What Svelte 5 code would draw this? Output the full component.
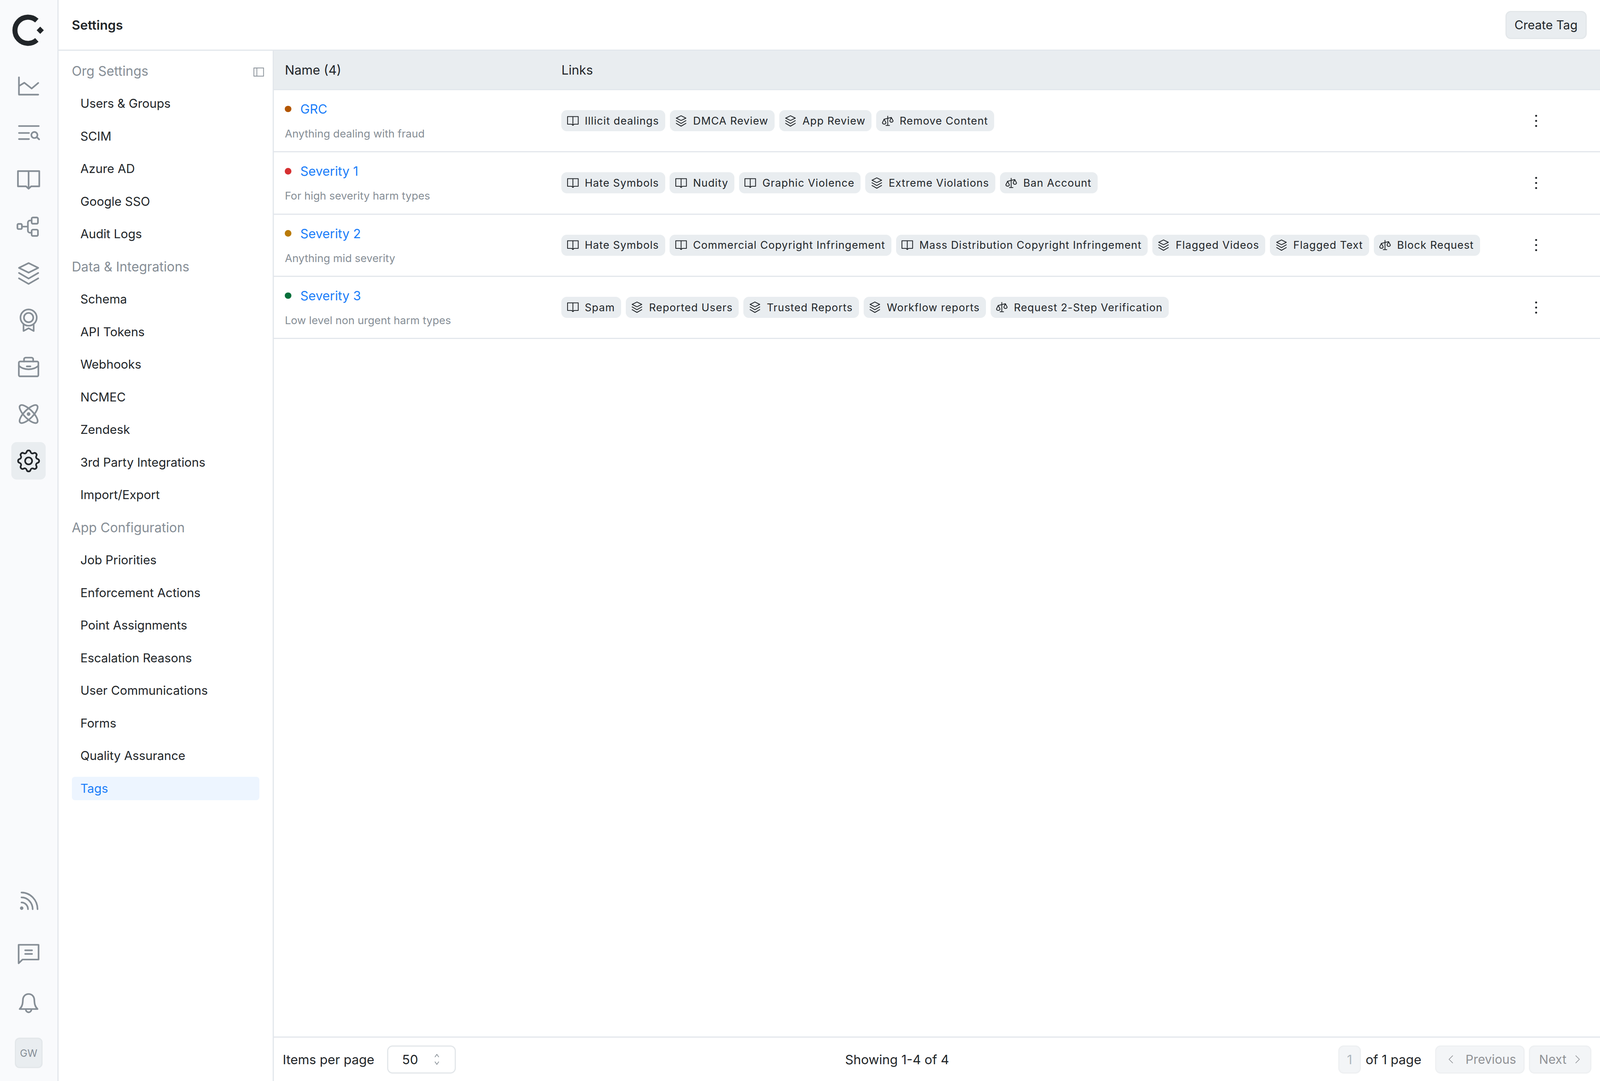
<script>
  const topIcons = ['chart', 'listSearch', 'book', 'flow', 'stack', 'award', 'briefcase', 'atom', 'gear']
  const bottomIcons = ['rss', 'message', 'bell']

  const navGroups = [
    { title: 'Org Settings', items: ['Users & Groups', 'SCIM', 'Azure AD', 'Google SSO', 'Audit Logs'] },
    { title: 'Data & Integrations', items: ['Schema', 'API Tokens', 'Webhooks', 'NCMEC', 'Zendesk', '3rd Party Integrations', 'Import/Export'] },
    { title: 'App Configuration', items: ['Job Priorities', 'Enforcement Actions', 'Point Assignments', 'Escalation Reasons', 'User Communications', 'Forms', 'Quality Assurance', 'Tags'] }
  ]

  const rows = [
    {
      name: 'GRC', color: '#b35600', desc: 'Anything dealing with fraud',
      links: [['book', 'Illicit dealings'], ['stack', 'DMCA Review'], ['stack', 'App Review'], ['scale', 'Remove Content']]
    },
    {
      name: 'Severity 1', color: '#d63031', desc: 'For high severity harm types',
      links: [['book', 'Hate Symbols'], ['book', 'Nudity'], ['book', 'Graphic Violence'], ['stack', 'Extreme Violations'], ['scale', 'Ban Account']]
    },
    {
      name: 'Severity 2', color: '#b97a08', desc: 'Anything mid severity',
      links: [['book', 'Hate Symbols'], ['book', 'Commercial Copyright Infringement'], ['book', 'Mass Distribution Copyright Infringement'], ['stack', 'Flagged Videos'], ['stack', 'Flagged Text'], ['scale', 'Block Request']]
    },
    {
      name: 'Severity 3', color: '#066f3a', desc: 'Low level non urgent harm types',
      links: [['book', 'Spam'], ['stack', 'Reported Users'], ['stack', 'Trusted Reports'], ['stack', 'Workflow reports'], ['scale', 'Request 2-Step Verification']]
    }
  ]
</script>

{#snippet icon(name)}
  <svg class="icon" viewBox="0 0 24 24" fill="none" stroke="currentColor" stroke-width="1.6" stroke-linecap="round" stroke-linejoin="round">
    {#if name === 'chart'}
      <path d="M2.5 3.5V20.5H21.5M2.5 12L7.8 8.8L15 14.5L21.5 9" />
    {:else if name === 'listSearch'}
      <path d="M2.5 5.3H22M2.5 12.1H12.4M2.5 18.1H12.4" />
      <circle cx="17.7" cy="14.1" r="3" />
      <path d="M20 16.2L22.4 18.4" />
    {:else if name === 'book'}
      <path d="M12 3.5H22.5V18.5H14.5L12 20.8L9.5 18.5H1.5V3.5H12ZM12 3.5V20.8" />
    {:else if name === 'flow'}
      <rect x="1" y="9.4" width="4.4" height="5" rx="1" />
      <rect x="15" y="3" width="6.2" height="6.2" rx="1.2" />
      <rect x="15" y="15" width="6.2" height="6.2" rx="1.2" />
      <path d="M5.4 12H11.3M15 6H13.3A2 2 0 0 0 11.3 8V16A2 2 0 0 0 13.3 18H15" />
    {:else if name === 'stack'}
      <path d="M12 1.8L21.5 6.5L12 11.2L2.5 6.5ZM2.5 11.5L12 17L21.5 11.5M2.5 16.8L12 22.3L21.5 16.8" />
    {:else if name === 'award'}
      <circle cx="12" cy="9.3" r="8" />
      <circle cx="12" cy="9.3" r="4.6" />
      <path d="M7 16V22.5L12 19.8L17 22.5V16" />
    {:else if name === 'briefcase'}
      <rect x="2.4" y="6.4" width="19.2" height="14.6" rx="1.2" />
      <path d="M7.5 6.4V4.2A1.6 1.6 0 0 1 9.1 2.6H14.9A1.6 1.6 0 0 1 16.5 4.2V6.4M2.4 10.6C7 15.2 17 15.2 21.6 10.6M10.2 11.2H13.8" />
    {:else if name === 'atom'}
      <ellipse cx="12" cy="12" rx="4.3" ry="11.8" transform="rotate(45 12 12)" />
      <ellipse cx="12" cy="12" rx="4.3" ry="11.8" transform="rotate(-45 12 12)" />
      <circle cx="12" cy="12" r="1" fill="currentColor" />
    {:else if name === 'gear'}
      <g transform="translate(12 12) scale(1.15) translate(-12 -12)" stroke-width="1.4">
        <path d="M10.325 4.317c.426 -1.756 2.924 -1.756 3.35 0a1.724 1.724 0 0 0 2.573 1.066c1.543 -.94 3.31 .826 2.37 2.37a1.724 1.724 0 0 0 1.065 2.572c1.756 .426 1.756 2.924 0 3.35a1.724 1.724 0 0 0 -1.066 2.573c.94 1.543 -.826 3.31 -2.37 2.37a1.724 1.724 0 0 0 -2.572 1.065c-.426 1.756 -2.924 1.756 -3.35 0a1.724 1.724 0 0 0 -2.573 -1.066c-1.543 .94 -3.31 -.826 -2.37 -2.37a1.724 1.724 0 0 0 -1.065 -2.572c-1.756 -.426 -1.756 -2.924 0 -3.35a1.724 1.724 0 0 0 1.066 -2.573c-.94 -1.543 .826 -3.31 2.37 -2.37c1 .608 2.296 .07 2.572 -1.065z" />
        <circle cx="12" cy="12" r="3" />
      </g>
    {:else if name === 'rss'}
      <path d="M5 4A15.8 16.5 0 0 1 20.8 20.4M5 8.8A11 11.7 0 0 1 16 20.4M5 13.8A6.4 6.6 0 0 1 11.4 20.4" />
      <circle cx="5.2" cy="19.4" r=".9" fill="currentColor" />
    {:else if name === 'message'}
      <path d="M2.2 2.8H21.8V17.3H6L2.2 21Z" />
      <path d="M8.6 8.2H15.4M8.6 11.8H15.4" />
    {:else if name === 'bell'}
      <path d="M12 2.4C8.6 2.4 6.5 5 6.4 8C6.2 11.6 6 14.4 3.2 17.2H20.8C18 14.4 17.8 11.6 17.6 8C17.5 5 15.4 2.4 12 2.4Z" />
      <path d="M9.2 17.4C9.5 21.4 14.5 21.4 14.8 17.4" />
    {:else if name === 'scale'}
      <path d="M12 2.8V21M8.5 21H15.5M4.9 8.7L19 5.2" />
      <path d="M4.9 8.7L1.5 15.6A3.6 3.6 0 0 0 8.5 15.6ZM19 5.2L16 12A3.4 3.4 0 0 0 22.6 12Z" />
    {/if}
  </svg>
{/snippet}

<div class="app">
  <aside class="rail">
    <svg class="logo" viewBox="0 0 90 90" fill="none">
      <path d="M70 17.5A36.5 36.5 0 1 0 70 71.5" stroke="#212529" stroke-width="14" />
      <path d="M79.5 34.5L89.5 44.5L79.5 54.5L69.5 44.5Z" fill="#212529" />
    </svg>

    <div class="rail-group">
      {#each topIcons as name}
        <div class="rail-item" class:active={name === 'gear'}>{@render icon(name)}</div>
      {/each}
    </div>

    <div class="rail-group bottom">
      {#each bottomIcons as name}
        <div class="rail-item">{@render icon(name)}</div>
      {/each}
      <div class="avatar">GW</div>
    </div>
  </aside>

  <div class="main">
    <header>
      <div class="title">Settings</div>
      <button class="create">Create Tag</button>
    </header>

    <div class="body">
      <nav>
        <svg class="collapse" viewBox="0 0 28 24" fill="none" stroke="currentColor" stroke-width="2">
          <rect x="1" y="1" width="26" height="22" />
          <path d="M9 1V23" />
        </svg>
        {#each navGroups as group}
          <div class="nav-title">{group.title}</div>
          {#each group.items as item}
            <div class="nav-item" class:current={item === 'Tags'}>{item}</div>
          {/each}
        {/each}
      </nav>

      <section class="content">
        <div class="table-head">
          <div class="col-name">Name (4)</div>
          <div>Links</div>
        </div>

        <div class="rows">
          {#each rows as row}
            <div class="row">
              <div class="col-name">
                <div class="name">
                  <span class="dot" style="background: {row.color};"></span>
                  <span>{row.name}</span>
                </div>
                <div class="desc">{row.desc}</div>
              </div>
              <div class="chips">
                {#each row.links as link}
                  <div class="chip">{@render icon(link[0])}<span>{link[1]}</span></div>
                {/each}
              </div>
              <div class="kebab"><i></i><i></i><i></i></div>
            </div>
          {/each}
        </div>

        <footer>
          <div class="foot-left">
            <span>Items per page</span>
            <div class="select">
              <span>50</span>
              <svg viewBox="0 0 16 34" fill="none" stroke="currentColor" stroke-width="2" stroke-linecap="round" stroke-linejoin="round">
                <path d="M3 10L8 3L13 10M3 24L8 31L13 24" />
              </svg>
            </div>
          </div>
          <div>Showing 1-4 of 4</div>
          <div class="foot-right">
            <div class="page-box">1</div>
            <span class="of">of 1 page</span>
            <div class="page-btn prev">
              <svg viewBox="0 0 16 26" fill="none" stroke="currentColor" stroke-width="2"><path d="M14 1L2 13L14 25" /></svg>
              <span>Previous</span>
            </div>
            <div class="page-btn next">
              <span>Next</span>
              <svg viewBox="0 0 16 26" fill="none" stroke="currentColor" stroke-width="2"><path d="M2 1L14 13L2 25" /></svg>
            </div>
          </div>
        </footer>
      </section>
    </div>
  </div>
</div>

<style>
  :global(body) {
    margin: 0;
    background: #fff;
    font-family: Inter, "Liberation Sans", sans-serif;
    color: #212529;
  }

  /* widths follow the window, 4460 wide is the design size */
  .app {
    --u: calc(100vw / 4460);
    display: flex;
    width: 100%;
    height: 100vh;
    overflow: hidden;
    font-size: calc(34 * var(--u));
  }

  .rail {
    width: calc(163 * var(--u));
    flex-shrink: 0;
    box-sizing: border-box;
    background: #f9fafc;
    border-right: 3px solid #e3e7ec;
    display: flex;
    flex-direction: column;
    align-items: center;
    padding: 33px 0;
  }

  .logo {
    width: calc(90 * var(--u));
    height: 90px;
    margin-left: calc(-4 * var(--u));
  }

  .rail-group {
    display: flex;
    flex-direction: column;
    align-items: center;
    gap: 24px;
    margin-top: 49px;
  }

  .rail-group.bottom {
    margin-top: auto;
    gap: 31px;
  }

  .bottom .rail-item:first-child {
    margin-bottom: 10px;
  }

  .rail-item {
    width: calc(96 * var(--u));
    height: 96px;
    border-radius: 14px;
    display: flex;
    align-items: center;
    justify-content: center;
    color: #868e96;
  }

  .rail-item .icon {
    width: calc(68 * var(--u));
    height: calc(68 * var(--u));
  }

  .rail-item.active {
    background: #e9edf0;
    color: #212529;
  }

  .avatar {
    width: calc(77 * var(--u));
    height: 78px;
    margin-top: 8px;
    box-sizing: border-box;
    border: 3px solid #e3e7ea;
    border-radius: 12px;
    background: #e9edf0;
    color: #868e96;
    font-size: calc(28 * var(--u));
    display: flex;
    align-items: center;
    justify-content: center;
  }

  .main {
    flex: 1;
    min-width: 0;
    display: flex;
    flex-direction: column;
  }

  header {
    height: 127px;
    flex-shrink: 0;
    border-bottom: 3px solid #e3e7ec;
    display: flex;
    align-items: center;
    justify-content: space-between;
    padding: 0 calc(37 * var(--u));
  }

  .title {
    font-weight: 600;
    font-size: calc(36 * var(--u));
  }

  .create {
    height: 72px;
    width: calc(227 * var(--u));
    border: 3px solid #e3e7ea;
    border-radius: 14px;
    background: #e9edf0;
    color: #212529;
    font-family: inherit;
    font-size: calc(34 * var(--u));
    padding: 0;
  }

  .body {
    flex: 1;
    min-height: 0;
    display: flex;
  }

  nav {
    position: relative;
    width: calc(600 * var(--u));
    flex-shrink: 0;
    box-sizing: border-box;
    border-right: 3px solid #e3e7ec;
    padding: 10px calc(37 * var(--u)) 0;
  }

  .collapse {
    position: absolute;
    left: calc(544 * var(--u));
    top: 42px;
    width: calc(29 * var(--u));
    height: 25px;
    color: #868e96;
  }

  .nav-title,
  .nav-item {
    height: 83.5px;
    display: flex;
    align-items: center;
  }

  .nav-title {
    color: #868e96;
    font-size: calc(36.5 * var(--u));
  }

  .nav-item {
    padding-left: calc(24 * var(--u));
    position: relative;
  }

  .nav-item.current {
    color: #1c7ef9;
  }

  .nav-item.current::before {
    content: '';
    position: absolute;
    left: 0;
    right: 0;
    top: 12px;
    bottom: 12px;
    border-radius: 8px;
    background: #edf5ff;
    z-index: -1;
  }

  .content {
    flex: 1;
    min-width: 0;
    display: flex;
    flex-direction: column;
  }

  .table-head {
    height: 101px;
    box-sizing: border-box;
    flex-shrink: 0;
    background: #e9edf0;
    border-bottom: 3px solid #e3e7ec;
    display: flex;
    align-items: center;
    font-size: calc(35.5 * var(--u));
  }

  .col-name {
    width: calc(802 * var(--u));
    flex-shrink: 0;
    padding-left: calc(31 * var(--u));
    box-sizing: border-box;
  }

  .rows {
    flex: 1;
    min-height: 0;
  }

  .row {
    height: 159.3px;
    box-sizing: border-box;
    border-bottom: 3px solid #e3e7ec;
    display: flex;
    align-items: center;
  }

  .name {
    display: flex;
    align-items: center;
    color: #1c7ef9;
    font-size: calc(35.5 * var(--u));
  }

  .dot {
    width: calc(18 * var(--u));
    height: calc(18 * var(--u));
    border-radius: 50%;
    margin-right: calc(25 * var(--u));
  }

  .desc {
    margin-top: 26px;
    font-size: calc(30 * var(--u));
    color: #868e96;
  }

  .chips {
    display: flex;
    gap: calc(13 * var(--u));
  }

  .chip {
    height: 54px;
    border-radius: 14px;
    background: #e9edf0;
    display: flex;
    align-items: center;
    gap: calc(16.5 * var(--u));
    padding: 0 calc(17 * var(--u)) 0 calc(14.5 * var(--u));
    font-size: calc(29.5 * var(--u));
    letter-spacing: calc(1.15 * var(--u));
    white-space: nowrap;
  }

  .chip .icon {
    width: calc(34 * var(--u));
    height: calc(34 * var(--u));
    flex-shrink: 0;
  }

  .kebab {
    margin-left: auto;
    margin-right: calc(175 * var(--u));
    display: flex;
    flex-direction: column;
    gap: 8px;
  }

  .kebab i {
    display: block;
    width: 5px;
    height: 5px;
    border-radius: 50%;
    background: #212529;
  }

  footer {
    height: 114px;
    box-sizing: border-box;
    flex-shrink: 0;
    border-top: 3px solid #e3e7ec;
    display: flex;
    align-items: center;
    justify-content: space-between;
    padding: 0 calc(24 * var(--u)) 0 calc(25 * var(--u));
    font-size: calc(36 * var(--u));
  }

  .foot-left,
  .foot-right {
    display: flex;
    align-items: center;
  }

  .select {
    width: calc(191 * var(--u));
    height: 72px;
    margin-left: calc(36 * var(--u));
    border: 3px solid #e3e7ea;
    border-radius: 14px;
    box-sizing: border-box;
    display: flex;
    align-items: center;
    justify-content: space-between;
    padding: 0 calc(42 * var(--u)) 0 calc(38 * var(--u));
  }

  .select svg {
    width: calc(16 * var(--u));
    height: calc(34 * var(--u));
    color: #868e96;
  }

  .page-box {
    width: calc(63 * var(--u));
    height: 72px;
    box-sizing: border-box;
    border: 3px solid #eef0f2;
    border-radius: 14px;
    background: #f3f5f7;
    color: #adb5bd;
    display: flex;
    align-items: center;
    justify-content: center;
  }

  .of {
    margin: 0 calc(39 * var(--u)) 0 calc(13 * var(--u));
  }

  .page-btn {
    height: 72px;
    box-sizing: border-box;
    border: 3px solid #eef0f2;
    border-radius: 14px;
    background: #f3f5f7;
    color: #909296;
    display: flex;
    align-items: center;
    font-size: calc(34.5 * var(--u));
  }

  .page-btn svg {
    width: calc(14 * var(--u));
    height: calc(25 * var(--u));
    flex-shrink: 0;
  }

  .prev {
    width: calc(249 * var(--u));
    padding-left: calc(33 * var(--u));
    gap: calc(34 * var(--u));
    margin-right: calc(12 * var(--u));
  }

  .next {
    width: calc(174 * var(--u));
    padding-left: calc(25 * var(--u));
    gap: calc(24 * var(--u));
  }
</style>
